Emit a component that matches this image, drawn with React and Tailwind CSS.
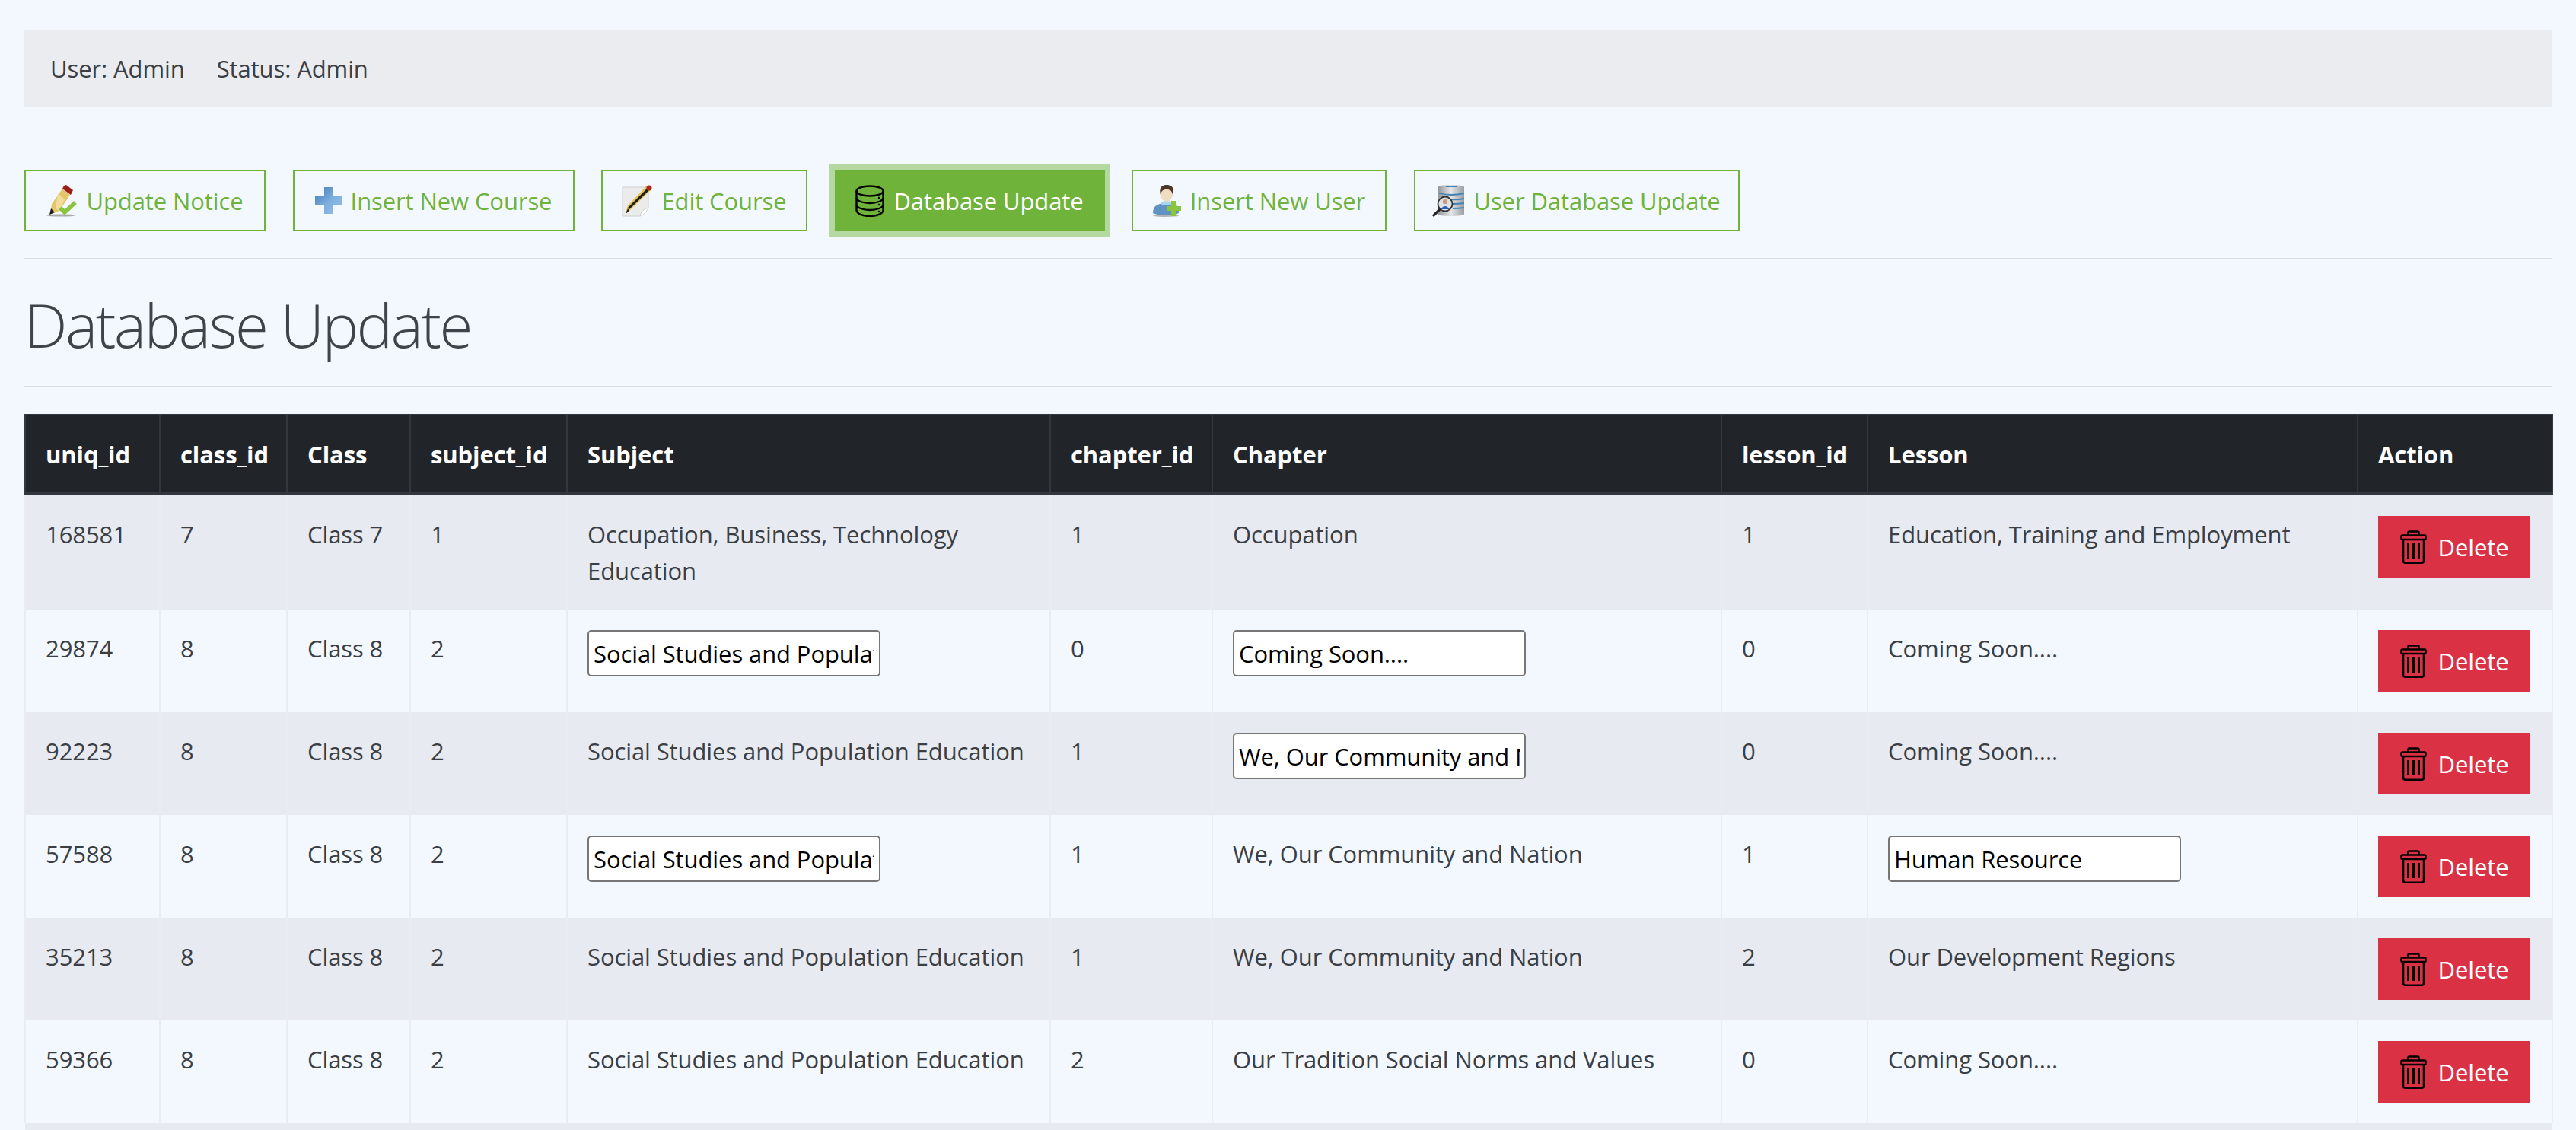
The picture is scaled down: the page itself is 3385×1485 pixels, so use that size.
const rows = [
  { id: "168581", classId: "7", cls: "Class 7", subId: "1", subject: "Occupation, Business, Technology Education", chId: "1", chapter: "Occupation", lesId: "1", lesson: "Education, Training and Employment" },
  { id: "29874", classId: "8", cls: "Class 8", subId: "2", subject: "Social Studies and Population Education", subInput: true, chId: "0", chapter: "Coming Soon....", chInput: true, lesId: "0", lesson: "Coming Soon...." },
  { id: "92223", classId: "8", cls: "Class 8", subId: "2", subject: "Social Studies and Population Education", chId: "1", chapter: "We, Our Community and Nation", chInput: true, lesId: "0", lesson: "Coming Soon...." },
  { id: "57588", classId: "8", cls: "Class 8", subId: "2", subject: "Social Studies and Population Education", subInput: true, chId: "1", chapter: "We, Our Community and Nation", lesId: "1", lesson: "Human Resource", lesInput: true },
  { id: "35213", classId: "8", cls: "Class 8", subId: "2", subject: "Social Studies and Population Education", chId: "1", chapter: "We, Our Community and Nation", lesId: "2", lesson: "Our Development Regions" },
  { id: "59366", classId: "8", cls: "Class 8", subId: "2", subject: "Social Studies and Population Education", chId: "2", chapter: "Our Tradition Social Norms and Values", lesId: "0", lesson: "Coming Soon...." },
];

const columns = [
  ["uniq_id", "w-[177px]"],
  ["class_id", "w-[167px]"],
  ["Class", "w-[162px]"],
  ["subject_id", "w-[206px]"],
  ["Subject", "w-[635px]"],
  ["chapter_id", "w-[213px]"],
  ["Chapter", "w-[669px]"],
  ["lesson_id", "w-[192px]"],
  ["Lesson", "w-[644px]"],
  ["Action", "w-[256px]"],
];

const PencilCheck = () => (
  <svg width="40" height="43" viewBox="0 0 40 43" className="shrink-0">
    <ellipse cx="19" cy="41" rx="19" ry="1.6" fill="#a9a9a9" />
    <path d="M21 6 L31 14 L17 35 L5 40 L7 26 Z" fill="#e6c46a" />
    <path d="M15 12 L24 20 L17 35 L12 32 Z" fill="#f2dc9c" />
    <path d="M23 2 L26 1 L35 8 L32 14 L21 6 Z" fill="#9b1f18" />
    <path d="M6 32 L11 37 L4 40 Z" fill="#1c1c1c" />
    <path d="M18 31 L24 37 L38 24" fill="none" stroke="#8bc53f" strokeWidth="5.5" />
  </svg>
);

const BluePlus = () => (
  <svg width="35" height="35" viewBox="0 0 35 35" className="shrink-0">
    <defs>
      <linearGradient id="plusFill" x1="0" y1="0" x2="1" y2="1">
        <stop offset="0" stopColor="#3f7ab6" />
        <stop offset="0.55" stopColor="#7fb0de" />
        <stop offset="1" stopColor="#93c0e8" />
      </linearGradient>
    </defs>
    <path d="M12 0 H23 V12 H35 V23 H23 V35 H12 V23 H0 V12 H12 Z" fill="url(#plusFill)" />
  </svg>
);

const PencilPaper = () => (
  <svg width="40" height="42" viewBox="0 0 40 42" className="shrink-0">
    <path d="M1 3 H35 V30 L24 41 H1 Z" fill="#ebebeb" stroke="#cdcdcd" />
    <path d="M24 41 C25 35 28 32 35 30 C32 36 29 39 24 41 Z" fill="#fff" stroke="#cdcdcd" />
    <path d="M33 1 L39 6 L11 33 L5 38 L8 27 Z" fill="#e3c34f" />
    <path d="M33 5 L35.5 7.5 L10 32 L8 30 Z" fill="#1f1f1f" />
    <path d="M8 31 L10 34 L5 38 Z" fill="#222" />
    <circle cx="36" cy="4" r="3.5" fill="#b5241c" />
  </svg>
);

const DatabaseStack = () => (
  <svg width="38" height="42" viewBox="0 0 38 42" fill="none" stroke="#000" strokeWidth="2.4" className="shrink-0">
    <ellipse cx="19" cy="8" rx="17.5" ry="6.5" />
    <path d="M1.5 8 V33 C1.5 38 10 41 19 41 C28 41 36.5 38 36.5 33 V8" />
    <path d="M1.5 17 C1.5 21 10 24 19 24 C28 24 36.5 21 36.5 17" />
    <path d="M1.5 26 C1.5 30 10 33 19 33 C28 33 36.5 30 36.5 26" />
    <circle cx="31" cy="17" r="1.2" fill="#000" stroke="none" />
    <circle cx="31" cy="26" r="1.2" fill="#000" stroke="none" />
    <circle cx="31" cy="35" r="1.2" fill="#000" stroke="none" />
  </svg>
);

const UserPlus = () => (
  <svg width="37" height="42" viewBox="0 0 37 42" className="shrink-0">
    <ellipse cx="17" cy="40.5" rx="17" ry="1.5" fill="#b5b5b5" />
    <path d="M0 37 C0 28 6 24 18 24 C29 24 34 28 34 37 C25 41 9 41 0 37 Z" fill="#5f93c2" />
    <ellipse cx="18" cy="24" rx="8" ry="3" fill="#a8d4f0" />
    <ellipse cx="18" cy="12" rx="8" ry="10" fill="#f0dcc0" />
    <path d="M10 13 C7 2 14 0 18 0 C24 0 29 3 26 13 C25 7 22 6 18 6 C14 6 11 7 10 13 Z" fill="#4a3528" />
    <path d="M24 21 H30 V28 H37 V34 H30 V41 H24 V34 H18 V28 H24 Z" fill="#8bc53f" />
  </svg>
);

const UserDatabase = () => (
  <svg width="42" height="43" viewBox="0 0 42 43" className="shrink-0">
    <defs>
      <linearGradient id="dbMetal" x1="0" y1="0" x2="1" y2="0">
        <stop offset="0" stopColor="#8f9397" />
        <stop offset="0.5" stopColor="#e3e5e7" />
        <stop offset="1" stopColor="#9a9ea2" />
      </linearGradient>
    </defs>
    <path d="M7 4 C7 0 42 0 42 4 V39 C42 43 7 43 7 39 Z" fill="url(#dbMetal)" />
    <path d="M18 3 H32 M9 12 Q25 16 42 12 M22 20 Q32 21 42 19 M27 26 Q35 26 42 25 M27 32 Q35 32 42 31" stroke="#3d83b8" strokeWidth="1.8" fill="none" />
    <circle cx="17" cy="26" r="9.5" fill="#dfe2e5" stroke="#333" strokeWidth="1.8" />
    <circle cx="17" cy="23" r="3.2" fill="#c99a7c" />
    <path d="M11 33 Q17 25 23 33 Z" fill="#2a5fb5" />
    <path d="M10 33 L1 42" stroke="#222" strokeWidth="3.2" />
  </svg>
);

const TrashIcon = () => (
  <svg width="35" height="44" viewBox="0 0 35 44" fill="none" stroke="#000" strokeWidth="2.6" className="shrink-0">
    <path d="M10.5 6.5 V3 Q10.5 1.5 12 1.5 H23 Q24.5 1.5 24.5 3 V6.5" />
    <rect x="1.5" y="6.5" width="32" height="5.5" rx="1.5" />
    <path d="M4 12 V40 Q4 42.7 7 42.7 H28 Q31 42.7 31 40 V12" />
    <path d="M10.5 17 V37 M17.5 17 V37 M24.5 17 V37" strokeWidth="3" />
  </svg>
);

const navItems = [
  { label: "Update Notice", Icon: PencilCheck, width: "w-[317px]" },
  { label: "Insert New Course", Icon: BluePlus, width: "w-[370px]" },
  { label: "Edit Course", Icon: PencilPaper, width: "w-[271px]" },
  { label: "Database Update", Icon: DatabaseStack, width: "w-[355px]", active: true },
  { label: "Insert New User", Icon: UserPlus, width: "w-[335px]" },
  { label: "User Database Update", Icon: UserDatabase, width: "w-[428px]" },
];

const TextInput = ({ value }) => (
  <input
    readOnly
    value={value}
    className="block w-[385px] h-[61px] bg-white border-2 border-[#767676] rounded-[5px] px-[6px] text-[31px] text-black outline-none"
  />
);

const cellCls = "border-x-2 border-[#e9edf2] pl-[26px] pr-[22px] py-[27px] align-top";

export default function App() {
  return (
    <div className="h-[1485px] overflow-hidden bg-[#f3f8ff] pl-[32px] pr-[32px] pt-[40px] text-[31px] leading-[48px] text-[#3b3f44] font-['Open_Sans','Noto_Sans',sans-serif] tracking-[-0.1px]">
      <div className="flex h-[100px] items-center gap-[42px] bg-[#ebecf0] px-[34px]">
        <span>User: Admin</span>
        <span>Status: Admin</span>
      </div>

      <div className="mt-[83px] flex gap-[35.5px]">
        {navItems.map(({ label, Icon, width, active }) => (
          <button
            key={label}
            className={
              active
                ? `flex h-[81px] ${width} items-center justify-center gap-[12px] whitespace-nowrap bg-[#6fb33a] text-white ring-[7px] ring-[#b4d8a0]`
                : `flex h-[81px] ${width} items-center justify-center gap-[12px] whitespace-nowrap border-[2px] border-[#6fb33a] text-[#6fb33a]`
            }
          >
            <Icon />
            {label}
          </button>
        ))}
      </div>

      <hr className="mt-[35px] border-t-2 border-[#dadfe3]" />
      <h1 className="mt-[43px] h-[84px] text-[80px] font-light leading-[84px] text-[#3f4449] tracking-[-2.6px]">
        Database Update
      </h1>
      <hr className="mt-[39px] border-t-2 border-[#dadfe3]" />

      <table className="mt-[35px] w-[3321px] table-fixed border-collapse">
        <thead>
          <tr className="h-[104px] bg-[#212529] text-white border-x-2 border-t-2 border-b-4 border-[#32383e]">
            {columns.map(([name, width]) => (
              <th key={name} className={`${width} border-x-2 border-[#32383e] pl-[26px] pr-[22px] text-left font-bold`}>
                {name}
              </th>
            ))}
          </tr>
        </thead>
        <tbody>
          {rows.map((row, i) => (
            <tr key={row.id} className={i % 2 === 0 ? "bg-[#e7eaf1]" : "bg-[#f3f8ff]"}>
              <td className={cellCls}>{row.id}</td>
              <td className={cellCls}>{row.classId}</td>
              <td className={cellCls}>{row.cls}</td>
              <td className={cellCls}>{row.subId}</td>
              <td className={cellCls}>{row.subInput ? <TextInput value={row.subject} /> : row.subject}</td>
              <td className={cellCls}>{row.chId}</td>
              <td className={cellCls}>{row.chInput ? <TextInput value={row.chapter} /> : row.chapter}</td>
              <td className={cellCls}>{row.lesId}</td>
              <td className={cellCls}>{row.lesInput ? <TextInput value={row.lesson} /> : row.lesson}</td>
              <td className={cellCls}>
                <button className="flex h-[81px] w-[200px] items-center justify-center gap-[15px] bg-[#da3244] text-white">
                  <TrashIcon />
                  Delete
                </button>
              </td>
            </tr>
          ))}
          <tr className="h-[135px] bg-[#e7eaf1]">
            <td colSpan={10} />
          </tr>
        </tbody>
      </table>
    </div>
  );
}
